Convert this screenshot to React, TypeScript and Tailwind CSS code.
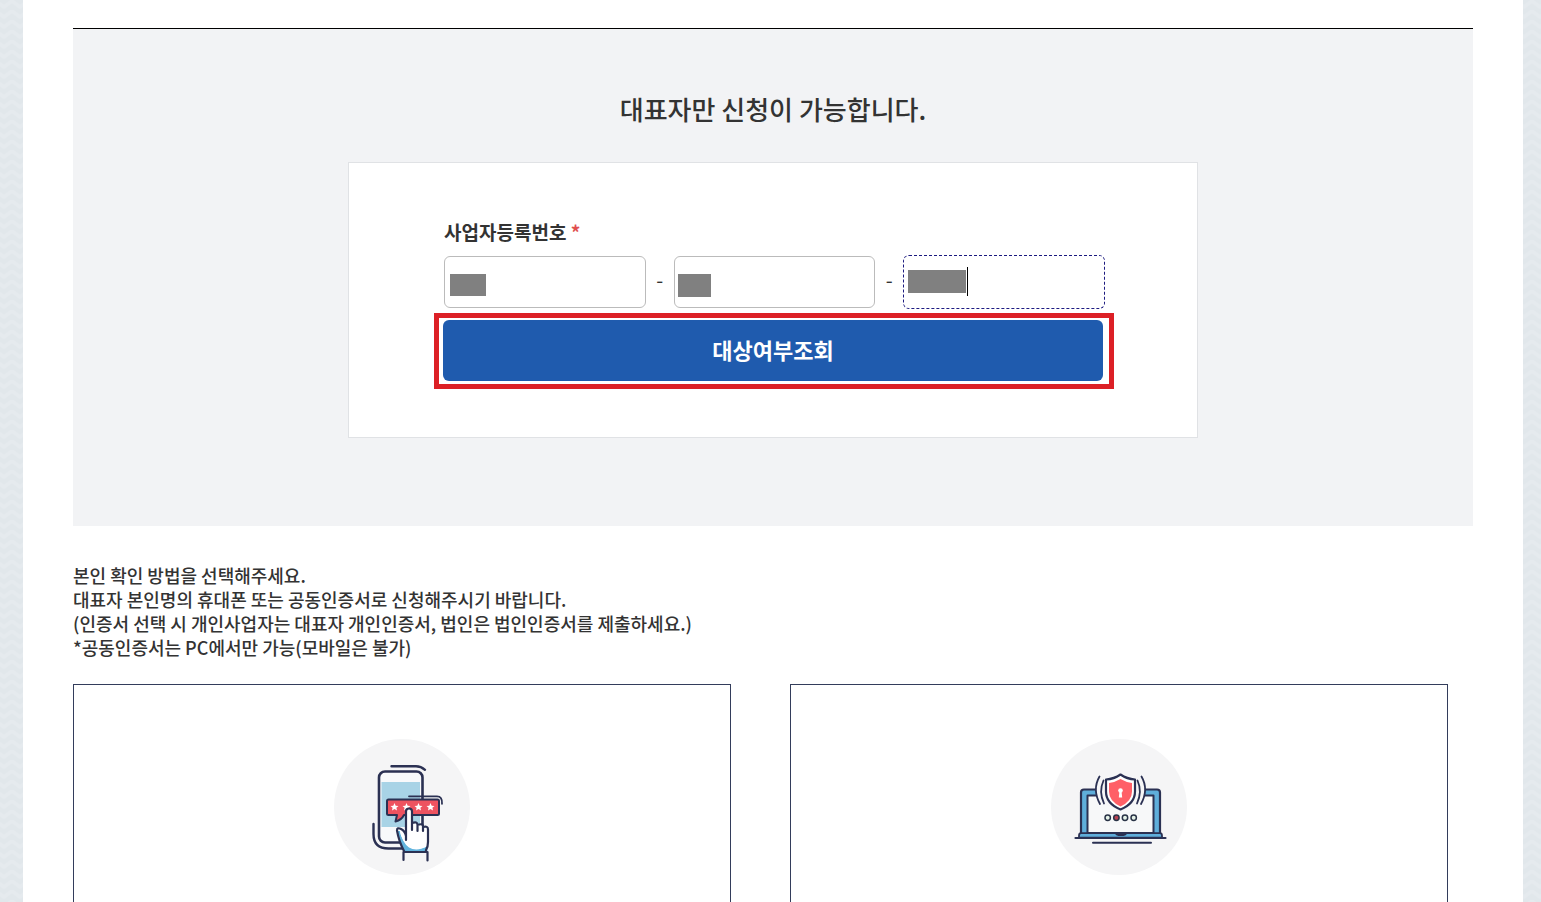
import React from "react";

const FONT = "font-['Noto_Sans_CJK_KR',sans-serif]";

function PhoneIcon() {
  return (
    <svg viewBox="0 0 136 136" className="size-[136px]" fill="none" aria-hidden="true">
      <circle cx="68" cy="68" r="68" fill="#f5f5f6" />
      <rect x="45" y="32.500" width="43.500" height="71" rx="6" fill="#f8f9fb" />
      <path d="M47.500 43h38.500v45H47.500z" fill="#a8d3e6" />
      <g stroke="#2b3153" strokeLinecap="round" strokeLinejoin="round">
        <rect x="45" y="32.500" width="43.500" height="71" rx="6" strokeWidth="2.600" />
        <path d="M57.500 27.300H82q5 0 9 3.500M39.500 85v10q0 14.500 15 14.500H70" strokeWidth="2.400" />
        <path d="M75 57.300h28q5.500 0 5 7.500" strokeWidth="1.800" />
        <path d="M54.500 60.500h49q1.500 0 1.500 1.500v12.500q0 1.500-1.500 1.500H70q-2.500 5-8.500 6.500l1.500-6.500h-8.500q-1.500 0-1.500-1.500V62q0-1.500 1.500-1.500z" fill="#ee5360" strokeWidth="2" />
      </g>
      <g fill="#fff">
        {[60.5, 72.5, 84.5, 96.5].map((x) => (
          <path key={x} transform={`translate(${x} 68)`} d="M0-4 1.200-1.300 4-1.100 1.900.8 2.500 3.600 0 2.100-2.500 3.600-1.900.8-4-1.100-1.200-1.300z" />
        ))}
      </g>
      <path d="M72 101V72.500q0-3 3-3t3 3V84q5-2 5.500 2 5-2 5.500 1.500 5-1 5 3V103q0 5-2 8v2H70.500Q65 103 63 91.500q0-3.500 4-1.500 4 2 5 7z" fill="#fff" />
      <path d="M63.500 92q2 11 7.500 21h22l1-6q-13 6-20 0-7-7-8-15z" fill="#62b4de" />
      <path d="M65.500 91q3 13 9.500 17.500 8 4.500 18.500-1.500V92l-20 2v7q-2-7-8-10z" fill="#fff" />
      <path d="M72 101V72.500q0-3 3-3t3 3V91M78 84q5.500-2 5.500 2v6M83.500 86q5.500-2 5.500 1.500V92M89 88q5-1.500 5 2.500V103q0 5-2 8v2M72 101v-4q-1-5-5-7-4-2-4 1.500Q65 103 70.500 113H93M69.500 113v8M93.500 113v8.500" stroke="#2b3153" strokeWidth="2.200" strokeLinecap="round" strokeLinejoin="round" />
    </svg>
  );
}

function LaptopIcon() {
  return (
    <svg viewBox="0 0 136 136" className="size-[136px]" fill="none" aria-hidden="true">
      <circle cx="68" cy="68" r="68" fill="#f5f5f6" />
      <g stroke="#2b3153" strokeLinecap="round" strokeLinejoin="round">
        <path d="M30 95V53.500q0-3 3-3h73q3 0 3 3V95z" fill="#5faedb" strokeWidth="2.200" />
        <path d="M36.500 94V56.500h66V94z" fill="#f7f8f9" strokeWidth="2" />
        <path d="M30 94.200h34.500q1 2 3 2h5q2 0 3-2H109q2 0 2 2.500v2H28v-2q0-2.500 2-2.500z" fill="#5faedb" strokeWidth="1.800" />
        <path d="M24.500 99h90" strokeWidth="2.200" />
        <path d="M42 103.800h58" strokeWidth="2" />
      </g>
      <ellipse cx="69.500" cy="52" rx="24.500" ry="17" fill="#f6f6f7" />
      <path d="M69.500 35.500Q76 40 84 40.500v12q0 12-14.500 18Q55 64.500 55 52.500v-12q8-.5 14.500-5z" fill="#fff" stroke="#2b3153" strokeWidth="2.200" strokeLinejoin="round" />
      <path d="M69.500 40q5 3 11.500 4v8.500q0 9.500-11.500 15Q58 62 58 52.500V44q6.500-1 11.500-4z" fill="#ff5f67" />
      <circle cx="69.500" cy="51.500" r="2.300" fill="#fff" />
      <path d="m68.500 52-.7 6.500h3.400l-.7-6.500z" fill="#fff" />
      <path d="M52.500 41.500q-5 11 .5 23M48.500 37.500q-7.500 13 .5 27.500M86.500 41.500q5 11-.5 23M90.500 37.500q7.500 13-.5 27.500" stroke="#2b3153" strokeWidth="1.800" strokeLinecap="round" />
      <g stroke="#293346" strokeWidth="1.500">
        <circle cx="56.700" cy="78.800" r="2.700" fill="#e5f2e8" />
        <circle cx="65.400" cy="78.800" r="2.700" fill="#b94353" />
        <circle cx="74" cy="78.800" r="2.700" fill="#e5f2e8" />
        <circle cx="82.700" cy="78.800" r="2.700" fill="#e5f2e8" />
      </g>
    </svg>
  );
}

function Backdrop() {
  return (
    <svg className="absolute inset-0 size-full" aria-hidden="true">
      <defs>
        <pattern id="zigzag" width="16" height="10" patternUnits="userSpaceOnUse">
          <rect width="16" height="10" fill="#e1e7eb" />
          <path d="M-4 1 4 7 12 1 20 7" fill="none" stroke="#e5eaee" strokeWidth="4" />
        </pattern>
      </defs>
      <rect width="100%" height="100%" fill="url(#zigzag)" />
    </svg>
  );
}

export default function App() {
  return (
    <div className={`relative flex min-h-screen flex-col pr-[18px] pl-[23px] text-[#333] ${FONT}`}>
      <Backdrop />
      <main className="relative flex flex-1 flex-col bg-white px-[50px] pt-7">
        <section className="border-t border-black bg-[#f2f3f5] pt-[60px] pb-[88px]">
          <h1 className="text-center text-[26px] leading-10 font-medium">대표자만 신청이 가능합니다.</h1>
          <form
            className="mx-auto mt-[33px] max-w-[850px] border border-[#e0e2e5] bg-white pt-[55px] pr-[83px] pb-12 pl-[85px]"
            onSubmit={(e) => e.preventDefault()}
          >
            <div className="pr-[9px] pl-[10px]">
              <label htmlFor="biz-no-1" className="block text-[19px] leading-7 font-bold">
                사업자등록번호 <span className="text-[#e04f4f]">*</span>
              </label>
              <div className="mt-2 flex h-14 items-center">
                <div className="relative flex-1">
                  <input id="biz-no-1" className="block h-[52px] w-full rounded-md border border-[#bbb] bg-white px-2 outline-none" />
                  <span className="absolute top-[18px] left-1.5 h-[22px] w-9 bg-[#808080]" />
                </div>
                <span className="w-7 pb-1 text-center text-xl leading-6">-</span>
                <div className="relative flex-1">
                  <input aria-label="사업자등록번호 둘째 자리" className="block h-[52px] w-full rounded-md border border-[#bbb] bg-white px-2 outline-none" />
                  <span className="absolute top-[18px] left-1 h-[23px] w-[33px] bg-[#808080]" />
                </div>
                <span className="w-7 pb-1 text-center text-xl leading-6">-</span>
                <div className="relative flex-1">
                  <input
                    aria-label="사업자등록번호 셋째 자리"
                    className="block h-[54px] w-full rounded-md border border-dashed border-[#1c1a80] bg-white px-2 outline-none"
                  />
                  <span className="absolute top-[15px] left-[5px] h-[23px] w-[58px] bg-[#808080]" />
                  <span className="absolute top-3 left-16 h-[29px] w-px bg-black" />
                </div>
              </div>
            </div>
            <div className="mt-[3px] border-[5px] border-[#dc2026] pt-0.5 pr-1.5 pb-[3px] pl-1">
              <button type="submit" className="block h-[61px] w-full rounded-md bg-[#1f5bae] pb-0.5 text-[22px] font-bold text-white">
                대상여부조회
              </button>
            </div>
          </form>
        </section>

        <p className="mt-[37px] text-lg leading-6 font-medium">
          본인 확인 방법을 선택해주세요.
          <br />
          대표자 본인명의 휴대폰 또는 공동인증서로 신청해주시기 바랍니다.
          <br />
          (인증서 선택 시 개인사업자는 대표자 개인인증서, 법인은 법인인증서를 제출하세요.)
          <br />
          *공동인증서는 PC에서만 가능(모바일은 불가)
        </p>

        <div className="mt-[25px] flex flex-1 gap-[59px] pr-[25px]">
          <section className="flex flex-1 justify-center border border-b-0 border-[#333d5b] pt-[54px]">
            <PhoneIcon />
          </section>
          <section className="flex flex-1 justify-center border border-b-0 border-[#333d5b] pt-[54px]">
            <LaptopIcon />
          </section>
        </div>
      </main>
    </div>
  );
}
